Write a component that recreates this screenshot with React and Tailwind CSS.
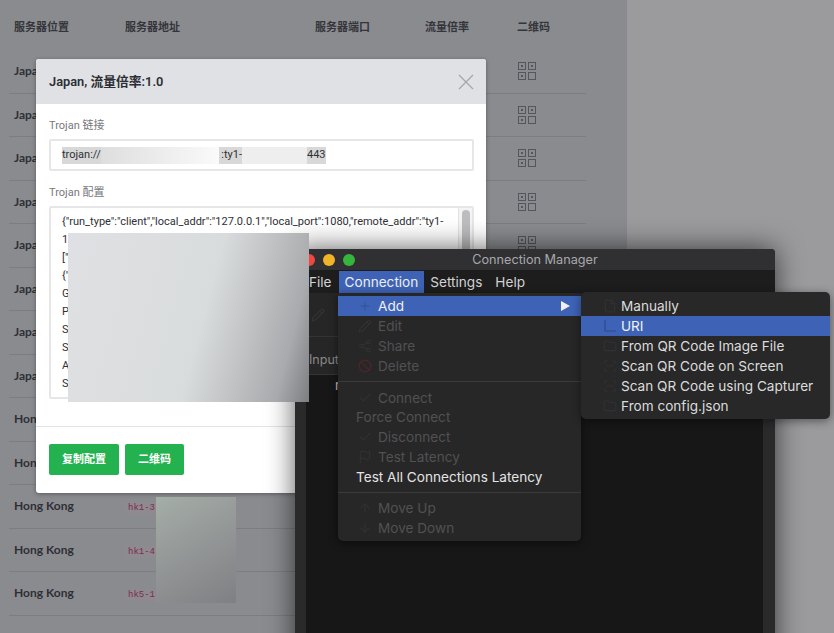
import React from 'react'
import { Plus, Pencil, Share2, Ban, Check, Flag, ArrowUp, ArrowDown, File, Folder, ScanLine } from 'lucide-react'

const rows = [
  ['Japan', 'jp1-1'], ['Japan', 'jp1-2'], ['Japan', 'jp1-3'], ['Japan', 'jp1-4'], ['Japan', 'jp1-5'],
  ['Japan', 'jp1-6'], ['Japan', 'jp1-7'], ['Japan', 'jp1-8'], ['Hong Kong', 'hk1-1'], ['Hong Kong', 'hk1-2'],
  ['Hong Kong', 'hk1-3'], ['Hong Kong', 'hk1-4'], ['Hong Kong', 'hk5-1'],
]

const configLines = ['1', '["', '{"', 'G', 'P', 'S', 'S', 'A', 'S', 'S']

const QrIcon = () => (
  <svg width="18" height="18" viewBox="0 0 18 18" fill="none" stroke="#55565b" strokeWidth="1">
    <rect x="0.5" y="0.5" width="7" height="7" />
    <rect x="10.5" y="0.5" width="7" height="7" />
    <rect x="0.5" y="10.5" width="7" height="7" />
    <rect x="10.5" y="10.5" width="7" height="7" />
    <rect x="3" y="3" width="2" height="2" fill="#55565b" stroke="none" />
    <rect x="13" y="3" width="2" height="2" fill="#55565b" stroke="none" />
    <rect x="3" y="13" width="2" height="2" fill="#55565b" stroke="none" />
  </svg>
)

const UriIcon = () => (
  <svg width="14" height="14" viewBox="0 0 14 14" fill="none" stroke="#2f4a8c" strokeWidth="1.2">
    <path d="M2 1v11h11" />
  </svg>
)

const ServerTable = () => (
  <div className="w-[627px] h-full bg-[#8a8b8f] pl-[9px] pr-[41px] font-[Lato,'Noto_Sans_CJK_SC',sans-serif]">
    <div className="grid grid-cols-[116px_190px_110px_92px_1fr] h-[50px] items-center pt-[5px] text-[11px] font-bold text-[#34353a]">
      <div className="pl-[5px]">服务器位置</div>
      <div>服务器地址</div>
      <div>服务器端口</div>
      <div>流量倍率</div>
      <div>二维码</div>
    </div>
    {rows.map(([place, host], index) => (
      <div
        key={index}
        className="grid grid-cols-[116px_190px_110px_92px_1fr] h-[43.5px] items-center border-b border-[#7c7d81] text-[12px] text-[#2e2f35]"
      >
        <div className="pl-[5px] font-bold">{place}</div>
        <div>
          <code className="px-[3px] py-[1px] bg-[#8f8a8f] font-['Liberation_Mono',monospace] text-[9px] text-[#7d2c4c]">{host}</code>
        </div>
        <div>443</div>
        <div>1.0</div>
        <div className="pl-[1px]"><QrIcon /></div>
      </div>
    ))}
  </div>
)

const TrojanModal = () => (
  <div className="absolute left-[36px] top-[59px] w-[450px] h-[434px] bg-white rounded-[3px] shadow-[0_1px_4px_rgba(0,0,0,0.35)] font-[Roboto,'Noto_Sans_CJK_SC',sans-serif]">
    <div className="flex items-center justify-between h-[45px] pl-[13px] pr-[12px] bg-[#e0e1e5] rounded-t-[3px]">
      <span className="text-[12.8px] font-semibold text-[#2b2d33]">Japan, 流量倍率:1.0</span>
      <svg width="16" height="16" viewBox="0 0 16 16" stroke="#a5a6aa" strokeWidth="1.3">
        <path d="M1 1l14 14M15 1L1 15" />
      </svg>
    </div>
    <div className="pl-[13px] pr-[12px] pt-[14px]">
      <div className="h-[16px] text-[11px] leading-[16px] text-[#77787c]">Trojan 链接</div>
      <div className="flex items-center h-[32px] mt-[5px] px-[11px] border-2 border-[#e6e6e8] rounded-[2px] text-[11px] text-[#2f3035]">
        <div className="flex items-center h-[17px] bg-[#d8d8d8]">
          <span className="w-[39px]">trojan://</span>
          <span className="w-[118px] h-full bg-[linear-gradient(90deg,#dedede,#fafafa)]" />
          <span className="w-[23px] text-right">:ty1-</span>
          <span className="w-[65px] h-full bg-[#eeeeee]" />
          <span className="w-[19px]">443</span>
        </div>
      </div>
      <div className="h-[16px] mt-[14px] text-[11px] leading-[16px] text-[#77787c]">Trojan 配置</div>
      <div className="relative h-[193px] mt-[5px] pl-[11px] pt-[5px] border-2 border-[#e6e6e8] rounded-[2px] overflow-hidden text-[11px] leading-[18px] text-[#2f3035]">
        <div className="whitespace-nowrap">{'{"run_type":"client","local_addr":"127.0.0.1","local_port":1080,"remote_addr":"ty1-'}</div>
        {configLines.map((line, index) => (
          <div key={index}>{line}</div>
        ))}
        <div className="absolute right-0 top-0 bottom-0 w-[14px] pt-[2px] pl-[3px] bg-[#f4f4f4] border-l border-[#e2e2e2]">
          <div className="w-[8px] h-[42px] rounded-[4px] bg-[#bdbdbf]" />
        </div>
      </div>
    </div>
    <div className="flex gap-[6px] mt-[27px] pt-[17px] px-[13px] border-t border-[#e4e4e6] text-[11px] font-bold text-white">
      <button className="w-[70px] h-[31px] pt-[2px] rounded-[2px] bg-[#23b24f]">复制配置</button>
      <button className="w-[59px] h-[31px] pt-[2px] rounded-[2px] bg-[#23b24f]">二维码</button>
    </div>
  </div>
)

const MainItem = ({ icon, children, active, dim = true, indent = 40, tight }) => (
  <div
    className={`relative flex items-center ${tight ? 'h-[19px]' : 'h-[20px]'} ${active ? 'bg-[#3e63b6] text-[#f0f0f0]' : dim ? 'text-[#515153]' : 'text-[#e4e4e4]'} ${indent === 40 ? 'pl-[40px]' : 'pl-[18px]'}`}
  >
    {icon && <span className="absolute left-[20px] top-[3px]">{icon}</span>}
    {children}
  </div>
)

const SubItem = ({ icon, children, active }) => (
  <div className={`relative flex items-center h-[20px] pl-[40px] text-[#dcdcdc] ${active ? 'bg-[#3e63b6] text-[#f2f2f2]' : ''}`}>
    <span className="absolute left-[22px] top-[3px]">{icon}</span>
    {children}
  </div>
)

const dimIcon = 'w-[14px] h-[14px] text-[#313133]'

const ConnectionMenu = () => (
  <div className="absolute left-[43px] top-[44px] w-[243px] h-[248px] pt-[3px] bg-[#272727] rounded-b-[5px] shadow-[0_2px_8px_rgba(0,0,0,0.5)]">
    <MainItem active icon={<Plus className="w-[14px] h-[14px] text-[#2f4a8c]" strokeWidth={1.2} />}>
      Add
      <svg className="absolute left-[223px] top-[5px]" width="9" height="10" viewBox="0 0 9 10" fill="#f0f0f0">
        <path d="M0 0l9 5-9 5z" />
      </svg>
    </MainItem>
    <MainItem icon={<Pencil className={dimIcon} />}>Edit</MainItem>
    <MainItem icon={<Share2 className={dimIcon} />}>Share</MainItem>
    <MainItem icon={<Ban className="w-[14px] h-[14px] text-[#4f2629]" />}>Delete</MainItem>
    <div className="h-px mt-[5px] mb-[6px] bg-[#3a3a3a]" />
    <MainItem icon={<Check className={dimIcon} />}>Connect</MainItem>
    <MainItem indent={18} tight>Force Connect</MainItem>
    <MainItem icon={<Check className={dimIcon} />}>Disconnect</MainItem>
    <MainItem icon={<Flag className={dimIcon} />}>Test Latency</MainItem>
    <MainItem dim={false} indent={18}>Test All Connections Latency</MainItem>
    <div className="h-px my-[5px] bg-[#3a3a3a]" />
    <MainItem icon={<ArrowUp className={dimIcon} />}>Move Up</MainItem>
    <MainItem icon={<ArrowDown className={dimIcon} />}>Move Down</MainItem>
  </div>
)

const AddSubmenu = () => (
  <div className="absolute left-[286px] top-[43px] w-[249px] h-[127px] pt-[4px] bg-[#282828] rounded-[5px] shadow-[0_2px_10px_rgba(0,0,0,0.45)]">
    <SubItem icon={<File className={dimIcon} />}>Manually</SubItem>
    <SubItem active icon={<UriIcon />}>URI</SubItem>
    <SubItem icon={<Folder className={dimIcon} />}>From QR Code Image File</SubItem>
    <SubItem icon={<ScanLine className={dimIcon} />}>Scan QR Code on Screen</SubItem>
    <SubItem icon={<ScanLine className={dimIcon} />}>Scan QR Code using Capturer</SubItem>
    <SubItem icon={<Folder className={dimIcon} />}>From config.json</SubItem>
  </div>
)

const ConnectionManager = () => (
  <div className="absolute left-[295px] top-[249px] w-[480px] h-[420px] rounded-t-[4px] bg-[#2a2a2a] shadow-[0_0_28px_rgba(0,0,0,0.65)] font-[Inter,sans-serif] text-[13.6px]">
    <div className="relative flex items-center justify-center h-[22px] pt-[1px] bg-[#303032] rounded-t-[4px] border-b border-[#1c1c1c] text-[12.7px] text-[#a8a8aa]">
      <div className="absolute left-[8px] top-[5px] flex gap-[8px]">
        <span className="w-[12px] h-[12px] rounded-full bg-[#f2463e]" />
        <span className="w-[12px] h-[12px] rounded-full bg-[#f0b429]" />
        <span className="w-[12px] h-[12px] rounded-full bg-[#35b53c]" />
      </div>
      Connection Manager
    </div>
    <div className="flex items-center h-[22px] pl-[14px] bg-[#1d1d1d] text-[#d2d2d2]">
      <span className="mr-[7px]">File</span>
      <span className="px-[6px] h-full leading-[22px] bg-[#3e63b6] text-[#eeeeee]">Connection</span>
      <span className="ml-[6px]">Settings</span>
      <span className="ml-[13px]">Help</span>
    </div>
    <div className="flex items-center h-[44px] pl-[16px] bg-[#262626] border-b border-[#343434]">
      <Pencil className="w-[14px] h-[14px] text-[#333335]" />
    </div>
    <div className="flex items-center h-[38px] pt-[10px] pl-[14px] bg-[#262626] border-b border-[#343434] text-[12.5px] text-[#8a8a8a]">
      Input
    </div>
    <div className="ml-[11px] mr-[12px] h-[280px] bg-[#171717] text-[13px] text-[#c8c8c8]">
      <div className="pl-[29px] pt-[1px]">n</div>
    </div>
    <ConnectionMenu />
    <AddSubmenu />
  </div>
)

export default function App() {
  return (
    <div className="relative w-[834px] h-[633px] overflow-hidden bg-[#9b9b9e]">
      <ServerTable />
      <TrojanModal />
      <ConnectionManager />
      {/* blurred out parts of the screenshot */}
      <div className="absolute left-[68px] top-[233px] w-[241px] h-[169px] bg-[linear-gradient(105deg,#dfe0e3_0%,#d9dcdc_55%,#a9aaad_88%,#7d7e82_100%)]" />
      <div className="absolute left-[156px] top-[497px] w-[80px] h-[106px] bg-[linear-gradient(150deg,#a5aea8,#8f9192_60%,#7f8084)]" />
    </div>
  )
}
